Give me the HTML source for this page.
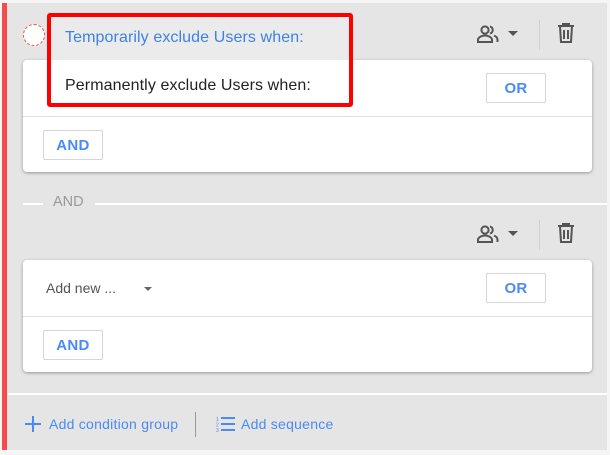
<!DOCTYPE html>
<html><head><style>
body{margin:0;width:610px;height:455px;background:#f5f5f5;font-family:"Liberation Sans",sans-serif;position:relative;overflow:hidden}
.a{position:absolute}
.panel{left:2px;top:3px;width:605px;height:447px;background:#e5e5e5}
.bar{left:2px;top:3px;width:5px;height:447px;background:#f44c4c}
.card{left:23px;width:569px;height:112px;background:#fff;border-radius:4px;box-shadow:0 1px 3px rgba(0,0,0,.35)}
.div{left:0;right:0;top:56px;height:1px;background:#e0e0e0}
.btn{border:1px solid #d6d6d6;border-radius:2px;color:#4a8af4;font-size:15px;font-weight:bold;text-align:center;line-height:29px;box-sizing:border-box;height:30px;letter-spacing:.3px}
.blue{color:#4a8af4}
</style></head><body>
<div class="a panel"></div>
<div class="a bar"></div>
<div class="a" style="left:23px;top:24px;width:22px;height:22px;border-radius:50%;border:1px dashed #f44c4c;background:#fff;box-sizing:border-box"></div>

<svg class="a" style="left:476px;top:24px" width="24" height="20" viewBox="0 0 24 20"><circle cx="9" cy="6" r="3.6" fill="none" stroke="#555" stroke-width="2"/><path d="M2 18v-2c0-3 4.5-4.5 7-4.5s7 1.5 7 4.5v2z" fill="none" stroke="#555" stroke-width="2"/><path d="M14 2.5a3.6 3.6 0 0 1 0 7M18 11.5c2 .8 3.5 2 3.5 4.5v2" fill="none" stroke="#555" stroke-width="2"/></svg>
<div class="a" style="left:508px;top:31px;border-left:5px solid transparent;border-right:5px solid transparent;border-top:5px solid #555"></div>
<div class="a" style="left:539px;top:20px;width:1px;height:30px;background:#d0d0d0"></div>
<svg class="a" style="left:557px;top:23px" width="18" height="20" viewBox="0 0 18 20"><path d="M1 3h16M6 3V1h6v2M3 3l1 16h10l1-16" fill="none" stroke="#555" stroke-width="2"/><path d="M7 7v9M11 7v9" stroke="#555" stroke-width="2"/></svg>

<div class="a card" style="top:60px">
 <div class="a div"></div>
 <div class="a btn" style="left:463px;top:13px;width:60px">OR</div>
 <div class="a btn" style="left:20px;top:70px;width:60px">AND</div>
</div>

<div class="a" style="left:23px;top:203px;width:20px;height:2px;background:#fff"></div>
<div class="a" style="left:53px;top:194px;font-size:14.5px;color:#999">AND</div>
<div class="a" style="left:95px;top:203px;width:512px;height:2px;background:#fff"></div>

<svg class="a" style="left:476px;top:224px" width="24" height="20" viewBox="0 0 24 20"><circle cx="9" cy="6" r="3.6" fill="none" stroke="#555" stroke-width="2"/><path d="M2 18v-2c0-3 4.5-4.5 7-4.5s7 1.5 7 4.5v2z" fill="none" stroke="#555" stroke-width="2"/><path d="M14 2.5a3.6 3.6 0 0 1 0 7M18 11.5c2 .8 3.5 2 3.5 4.5v2" fill="none" stroke="#555" stroke-width="2"/></svg>
<div class="a" style="left:508px;top:231px;border-left:5px solid transparent;border-right:5px solid transparent;border-top:5px solid #555"></div>
<div class="a" style="left:539px;top:220px;width:1px;height:30px;background:#d0d0d0"></div>
<svg class="a" style="left:557px;top:223px" width="18" height="20" viewBox="0 0 18 20"><path d="M1 3h16M6 3V1h6v2M3 3l1 16h10l1-16" fill="none" stroke="#555" stroke-width="2"/><path d="M7 7v9M11 7v9" stroke="#555" stroke-width="2"/></svg>

<div class="a card" style="top:260px">
 <div class="a" style="left:23px;top:20px;font-size:14px;color:#555">Add new ...</div>
 <div class="a" style="left:121px;top:27px;border-left:4px solid transparent;border-right:4px solid transparent;border-top:4px solid #666"></div>
 <div class="a div"></div>
 <div class="a btn" style="left:463px;top:13px;width:60px">OR</div>
 <div class="a btn" style="left:20px;top:70px;width:60px">AND</div>
</div>

<div class="a" style="left:8px;top:393px;width:599px;height:2px;background:#fff"></div>
<svg class="a" style="left:25px;top:416px" width="16" height="16"><path d="M8 0v16M0 8h16" stroke="#4a8af4" stroke-width="2"/></svg>
<div class="a blue" style="left:49px;top:416px;font-size:14px;letter-spacing:.25px">Add condition group</div>
<div class="a" style="left:195px;top:412px;width:1px;height:25px;background:#999"></div>
<svg class="a" style="left:216px;top:416px" width="20" height="16"><text x="0" y="5" font-size="5" fill="#4a8af4" font-family="Liberation Sans">1</text><text x="0" y="10.5" font-size="5" fill="#4a8af4" font-family="Liberation Sans">2</text><text x="0" y="16" font-size="5" fill="#4a8af4" font-family="Liberation Sans">3</text><path d="M5 2h14M5 8h14M5 14h14" stroke="#4a8af4" stroke-width="2"/></svg>
<div class="a blue" style="left:241px;top:416px;font-size:14px;letter-spacing:.25px">Add sequence</div>

<div class="a" style="left:47px;top:13px;width:306px;height:94px;border:4px solid #f00;border-radius:3px;box-sizing:border-box;background:#fff;overflow:hidden">
 <div class="a" style="left:0;top:0;width:100%;height:43px;background:#ebebeb"></div>
 <div class="a" style="left:14px;top:12px;font-size:16px;color:#3c82e8;letter-spacing:.1px">Temporarily exclude Users when:</div>
 <div class="a" style="left:14px;top:60px;font-size:16px;color:#222;letter-spacing:.1px">Permanently exclude Users when:</div>
</div>
</body></html>
